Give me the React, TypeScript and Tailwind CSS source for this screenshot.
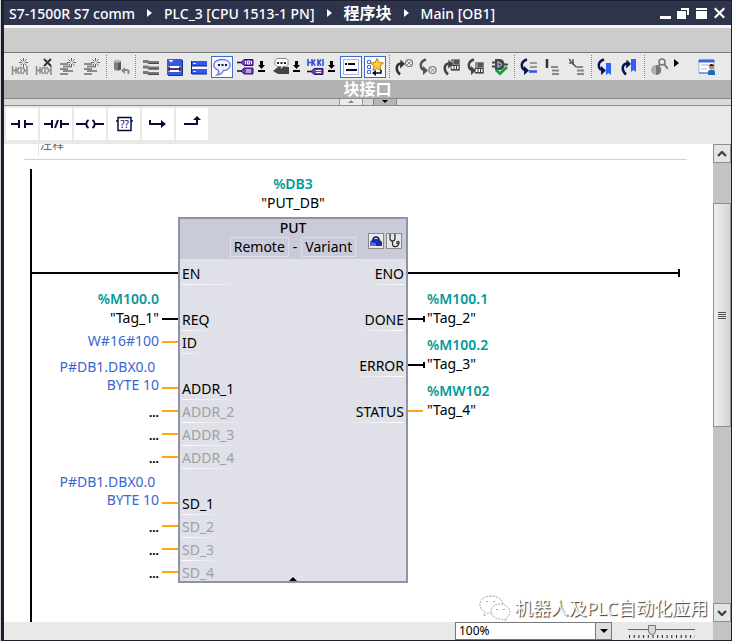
import React, { useState } from "react";

const CRUMBS = ["S7-1500R S7 comm", "PLC_3 [CPU 1513-1 PN]", "程序块", "Main [OB1]"];

type Kind = "bool" | "data";

interface Pin {
  name: string;
  kind: Kind;
  lines: string[];
  spaced?: boolean; // free row above the pin
  tag?: boolean; // first line is an absolute address
  optional?: boolean;
}

const INPUTS: Pin[] = [
  { name: "REQ", kind: "bool", lines: ["%M100.0", '"Tag_1"'], spaced: true, tag: true },
  { name: "ID", kind: "data", lines: ["W#16#100"] },
  { name: "ADDR_1", kind: "data", lines: ["P#DB1.DBX0.0 ", "BYTE 10"], spaced: true },
  { name: "ADDR_2", kind: "data", lines: [], optional: true },
  { name: "ADDR_3", kind: "data", lines: [], optional: true },
  { name: "ADDR_4", kind: "data", lines: [], optional: true },
  { name: "SD_1", kind: "data", lines: ["P#DB1.DBX0.0 ", "BYTE 10"], spaced: true },
  { name: "SD_2", kind: "data", lines: [], optional: true },
  { name: "SD_3", kind: "data", lines: [], optional: true },
  { name: "SD_4", kind: "data", lines: [], optional: true },
];

const OUTPUTS: Pin[] = [
  { name: "DONE", kind: "bool", lines: ["%M100.1", '"Tag_2"'] },
  { name: "ERROR", kind: "bool", lines: ["%M100.2", '"Tag_3"'] },
  { name: "STATUS", kind: "data", lines: ["%MW102", '"Tag_4"'] },
];

function Svg({ children }: { children: React.ReactNode }) {
  return (
    <svg viewBox="0 0 18 18" className="h-[18px] w-[18px] shrink-0" fill="none" aria-hidden="true">
      {children}
    </svg>
  );
}

function Spark() {
  return (
    <g stroke="#666">
      <path d="M12.5 0v3M12.5 6v3M8 4.5h3M14 4.5h3M9.5 1.5l2 2M15.5 1.5l-2 2M9.5 7.5l2-2M15.5 7.5l-2-2" />
    </g>
  );
}

function Contacts() {
  return (
    <g stroke="#8c8c8c" strokeWidth="1.5">
      <path d="M1.500 8v9M1.500 12.500h3M5 9v7" />
      <path d="M8.500 9L6 12.500 8.500 16M10 9v7" />
      <path d="M11.500 9l2.500 3.500-2.500 3.500M16 8v9M13.500 12.500H16" />
    </g>
  );
}

function Rows() {
  return <path d="M1 6h8M4 8.5h9M1 11h8M4 13h10M1 16h8" stroke="#8c8c8c" strokeWidth="2" />;
}

function PurpleTag({ y, mark }: { y: number; mark: string }) {
  return (
    <g>
      <path d={`M0 ${y + 3.5}h5`} stroke="#111" strokeWidth="1.5" />
      <path d={`M4 ${y + 3.5}l3-3h9v6H7z`} fill="#6f3fc0" stroke="#2c1264" />
      <path d={mark} stroke="#fff" />
    </g>
  );
}

// Curved arrow, going up into or down out of a call
function Arc({ up, color }: { up?: boolean; color: string }) {
  return up ? (
    <>
      <path d="M5 16.5C0 12 1 6 6 5.500" stroke={color} strokeWidth="2.5" />
      <path d="M5.500 1.500l4.500 4.500-5 4.500z" fill={color} />
    </>
  ) : (
    <>
      <path d="M7 1.500C0 4 1 9 4 12" stroke={color} strokeWidth="2.5" />
      <path d="M4 8l5 4.500L4 17z" fill={color} />
    </>
  );
}

function Wheel({ cx, cy }: { cx: number; cy: number }) {
  return (
    <g>
      <circle cx={cx} cy={cy} r="3.5" fill="#eee" stroke="#777" strokeWidth="1.2" />
      <path d={`M${cx - 2} ${cy - 2}l4 4M${cx + 2} ${cy - 2}l-4 4`} stroke="#888" />
    </g>
  );
}

function CallBox({ y }: { y: number }) {
  return (
    <g>
      <path d={`M8 ${y}h9v12H8z`} fill="#888" />
      <path d={`M11 ${y + 1}h5v4h-5z`} fill="#555" />
      <path d={`M8 ${y + 6.5}h8v4H8z`} fill="#fff" stroke="#444" />
      <path d={`M11 ${y + 7}v3M13.5 ${y + 7}v3`} stroke="#333" />
    </g>
  );
}

const ICONS: Record<string, React.ReactNode> = {
  insertNet: <><Contacts /><Spark /></>,
  deleteNet: <><Contacts /><path d="M9 1l7 7M16 1L9 8" stroke="#333" strokeWidth="2" /></>,
  insertRow: <><Rows /><Spark /></>,
  addRow: <><Rows /><Spark /></>,
  reset: (
    <>
      <path d="M2 3v8c0 2 7 2 7 0V3z" fill="#7d7d7d" />
      <path d="M6 3v9c2 0 3-.5 3-1V3z" fill="#555" />
      <ellipse cx="5.5" cy="3" rx="3.5" ry="1.6" fill="#bbb" />
      <path d="M12 12h3c2 0 2 2 1 4" stroke="#888" strokeWidth="2" />
      <path d="M9 12.500l4-3.500v7z" fill="#888" />
    </>
  ),
  networks: (
    <g>
      <path d="M2 2h5l1 1h10v3H7L6 5H2zM2 7.500h5l1 1h10v3H7l-1-1H2zM2 13h5l1 1h10v3H7l-1-1H2z" fill="#777" />
      <path d="M8 5.500h10M8 11h10M8 16.500h10" stroke="#444" />
    </g>
  ),
  openNet: (
    <>
      <path d="M2 1h15v16H2z" fill="#3358e8" />
      <path d="M3 8h13v6H3z" fill="#fff" />
      <path d="M3.500 2h5L6 4.500z" fill="#fff" />
      <path d="M4 8.500v5M15 8.500v5M4 11h11" stroke="#060633" strokeWidth="1.400" />
      <path d="M17.500 2v15.500H3" stroke="#1a2f8f" />
    </>
  ),
  closeNet: (
    <>
      <path d="M3 3h15v5H3zM3 11h15v5H3z" fill="#3457ec" />
      <path d="M3 8h15M3 16h15" stroke="#14247c" />
      <path d="M2.500 3v13" stroke="#14247c" />
      <path d="M4 5.500h3M4 13.500h3" stroke="#dfe6ff" />
      <path d="M3 9h15v1.500H3z" fill="#fff" />
    </>
  ),
  comment: (
    <>
      <path d="M9.500 1.500c10 0 10 11 1 11-1.500 3-4 4.500-6.500 4.500 2-1.500 2-3.500 1-5C-2 9 0 1.500 9.500 1.500z" fill="#eef1ff" stroke="#6d7fd8" strokeWidth="1.4" />
      <path d="M5 6h2v2H5zM8.500 6h2v2h-2zM12 6h2v2h-2z" fill="#111144" />
    </>
  ),
  operands: <><PurpleTag y={1} mark="M8.500 3v3M10.500 3v3h2V3h-2M14.500 3v3" /><PurpleTag y={9.5} mark="M9 12h5M9 14h5" /></>,
  tagInfo: (
    <>
      <path d="M1 13l5-4h11v7H6z" fill="#444" />
      <path d="M5 .500h9l2 2v4l-2 2h-3l-2 2.500V8.500H5l-2-2v-4z" fill="#fff" stroke="#888" />
      <path d="M5 4h2v2H5zM8.500 4h2v2h-2zM12 4h2v2h-2z" fill="#222" />
    </>
  ),
  contactTags: (
    <>
      <path d="M1 1v7M1 4.500h3M5 1v7M8 1.500L6 4.500l2 3M11 1v7M14 1.500l-2 3 2 3M16 1v7" stroke="#2f52e6" strokeWidth="1.6" />
      <PurpleTag y={10} mark="M9 12.500h5M9 14.500h5" />
    </>
  ),
  favList: (
    <>
      <path d="M1.500 1.500h15v15h-15z" fill="#fff" stroke="#a9b3e0" />
      <path d="M3 5h2v2H3zM6 11h1v2H6z" fill="#060633" />
      <path d="M6 6h7M4 12h11" stroke="#060633" strokeWidth="1.800" />
    </>
  ),
  favorites: (
    <>
      <path d="M1.500 2.500h3v3h-3zM1.500 7.500h3v3h-3zM1.500 12.500h3v3h-3z" stroke="#4a6be0" />
      <path d="M11 .500l2 4 4.500.500-3.500 3 1 4.500-4-2-4 2 1-4.500-3.500-3L9 4.500z" fill="#f9cf3c" stroke="#b98508" />
      <path d="M15 12v3H9" stroke="#060633" strokeWidth="1.500" />
      <path d="M6 15l4-3v6z" fill="#060633" />
    </>
  ),
  nextErr: <><Arc up color="#333" /><Wheel cx={14} cy={5} /></>,
  prevErr: <><Arc color="#555" /><Wheel cx={13.5} cy={12} /></>,
  toCaller: <><CallBox y={1} /><Arc up color="#444" /></>,
  toCalled: <><CallBox y={4} /><Arc color="#444" /></>,
  compile: (
    <>
      <path d="M1 4.500h4M1 8.500h4M12 6.500h5" stroke="#3b4a52" strokeWidth="2" />
      <path d="M4 1h5c6 0 6 11 0 11H4z" fill="#3b4a52" />
      <path d="M7 3.500l4 3-4 3z" stroke="#cfd8dc" />
      <path d="M5 12l4 3.500 7-6.500" stroke="#17a035" strokeWidth="2.800" />
    </>
  ),
  stepIn: (
    <>
      <path d="M10 5h7M10 9h7" stroke="#999" strokeWidth="2" />
      <path d="M9 13.500h8" stroke="#2f52e6" strokeWidth="2.500" />
      <Arc color="#0c1152" />
    </>
  ),
  expand: <><path d="M3 1v9" stroke="#333" strokeWidth="2.500" /><path d="M7 9h7M8 12.500h7M8 16h7" stroke="#888" strokeWidth="2" /></>,
  collapse: <><path d="M1 1l7 8M5 1v6M1 5h5" stroke="#555" strokeWidth="1.400" /><path d="M8 9h7M9 12.500h7M9 16h7" stroke="#888" strokeWidth="2" /></>,
  nextMark: <><path d="M9 5h5v12l-2.500-2L9 17z" fill="#2f62ee" /><Arc color="#0c1152" /></>,
  prevMark: <><path d="M10 1h5v13l-2.500-2-2.500 2z" fill="#2f62ee" /><Arc up color="#0c1152" /></>,
  monitor: (
    <>
      <circle cx="12" cy="4" r="3" stroke="#777" strokeWidth="1.500" />
      <path d="M14 6l4 5M10 6l-3 4" stroke="#777" strokeWidth="2" />
      <circle cx="6" cy="12" r="5" fill="#b0b0b0" />
      <path d="M6 7v10c7 0 7-10 0-10z" fill="#777" />
    </>
  ),
  layout: (
    <>
      <path d="M1 2h15v13H1z" fill="#fff" stroke="#9fb0e8" />
      <path d="M1 2h15v2H1zM1 15h15" fill="#3f68e2" stroke="#3f68e2" />
      <path d="M3 7h8M3 11h6" stroke="#aab4d8" />
      <circle cx="13.500" cy="9" r="2.500" fill="#c28a52" />
      <path d="M10 17v-3c0-3 7-3 7 0v3z" fill="#176fb8" />
      <path d="M11 8c1-3 5-2 5 0z" fill="#222" />
    </>
  ),
};

// "|" is a separator, "v" a drop-down mark, "*" marks a pressed button
const TOOLS = [
  "insertNet", "deleteNet", "insertRow", "addRow", "|", "reset", "|",
  "networks", "openNet", "closeNet", "*comment", "operands", "v", "tagInfo", "v", "contactTags", "v",
  "*favList", "*favorites", "|", "nextErr", "prevErr", "toCaller", "toCalled", "compile", "|",
  "stepIn", "expand", "collapse", "|", "nextMark", "prevMark", "|", "monitor",
];

function ToolButton({ id }: { id: string }) {
  const pressed = id.startsWith("*");
  const name = pressed ? id.slice(1) : id;
  return (
    <button
      aria-label={name}
      className={
        pressed
          ? "mx-px flex h-[22px] w-[22px] shrink-0 items-center justify-center border border-[#3a6fc9] bg-[#fbfcff]"
          : "flex h-[22px] w-6 shrink-0 items-center justify-center"
      }
    >
      <Svg>{ICONS[name]}</Svg>
    </button>
  );
}

function Toolbar() {
  return (
    <div className="flex h-[27px] shrink-0 items-center bg-[#e9e9e9] pl-1 pr-3">
      {TOOLS.map((t, i) => {
        if (t === "|") return <span key={i} className="flex h-[23px] w-[5px] shrink-0 justify-center"><span className="border-l border-dotted border-[#888]" /></span>;
        if (t === "v")
          return (
            <button key={i} aria-label="More" className="w-[11px] shrink-0">
              <svg viewBox="0 0 11 11" className="h-[11px] w-[11px]"><path d="M2 0h3v4h2L3.500 8 0 4h2zM0 9h7v2H0z" fill="#000" /></svg>
            </button>
          );
        return <ToolButton key={i} id={t} />;
      })}
      <button aria-label="More tools" className="-mt-2 ml-[3px]">
        <svg viewBox="0 0 5 8" className="h-2 w-[5px]"><path d="M0 0l5 4-5 4z" /></svg>
      </button>
      <span className="ml-auto flex"><ToolButton id="layout" /></span>
    </div>
  );
}

const FAVORITES: [string, React.ReactNode][] = [
  ["Normally open contact", <path key="a" d="M1 12h8M9 8v8M15 8v8M15 12h8" stroke="#0b0b3b" strokeWidth="2" />],
  ["Normally closed contact", <path key="b" d="M0 12h8M8 8v8M17 8v8M17 12h8M14 8l-3 8" stroke="#0b0b3b" strokeWidth="2" />],
  [
    "Coil",
    <g key="c">
      <path d="M-2 12h10M17 12h9" stroke="#0b0b3b" strokeWidth="2" />
      <path d="M10.500 8c-3 2-3 6 0 8M14.500 8c3 2 3 6 0 8" stroke="#0b0b3b" strokeWidth="2" />
    </g>,
  ],
  [
    "Empty box",
    <g key="d">
      <path d="M6 5.500h13v13H6zM4 9h2M19 9h2" stroke="#0b0b3b" strokeWidth="1.500" />
      <text x="12.500" y="15.500" textAnchor="middle" fontSize="10" fill="#0b0b3b">??</text>
    </g>,
  ],
  ["Open branch", <g key="e"><path d="M4 8v4h12" stroke="#0b0b3b" strokeWidth="2" /><path d="M15 8l5 4-5 4z" fill="#0b0b3b" /></g>],
  ["Close branch", <g key="f"><path d="M4 12h13V6" stroke="#0b0b3b" strokeWidth="2" /><path d="M13 8l4-4 4 4z" fill="#0b0b3b" /></g>],
];

function Operand({ pin }: { pin: Pin }) {
  if (pin.optional) return <span className="block text-[12px] font-bold leading-[17px]">...</span>;
  return (
    <span className="block shrink-0 whitespace-pre text-right">
      {pin.lines.map((l, i) => (
        <span
          key={i}
          className={
            pin.tag
              ? i === 0 ? "block font-semibold leading-[19px] text-[#009999]" : "block leading-[19px]"
              : "block leading-[18px] text-[#3a66d0]"
          }
        >
          {l}
        </span>
      ))}
    </span>
  );
}

function PinName({ name, optional, right }: { name: string; optional?: boolean; right?: boolean }) {
  return (
    <span className={right ? "flex flex-col items-end" : "flex flex-col items-start"}>
      <span className={optional ? "pt-[2px] leading-[20px] text-[#a0a0a4]" : "pt-[2px] leading-[20px]"}>{name}</span>
      <span className={right ? "h-px w-[130%] bg-linear-to-l from-white to-transparent" : "h-px w-[120%] bg-linear-to-r from-white to-transparent"} />
    </span>
  );
}

function Inputs() {
  return (
    <div className="flex w-[146px] shrink-0 flex-col pt-[93px]">
      <div className="flex h-[23px] pt-[10px]"><span className="h-[2px] flex-1 bg-black" /></div>
      {INPUTS.map((p, i) => (
        <div key={i} className={p.spaced ? "flex h-[46px] items-end justify-end gap-[3px]" : "flex h-[23px] items-end justify-end gap-[3px]"}>
          <div className={p.optional ? "pb-[2px]" : p.lines[0].startsWith("P#") ? "pb-[6px]" : "pb-1"}><Operand pin={p} /></div>
          <span className={p.kind === "bool" ? "mb-[11px] h-[2px] w-4 bg-black" : "mb-[11px] h-[2px] w-4 bg-[#ffa50a]"} />
        </div>
      ))}
    </div>
  );
}

function Outputs() {
  return (
    <div className="flex flex-1 flex-col pr-[33px] pt-[93px]">
      <div className="flex h-[23px] pt-[7px]">
        <span className="mt-[3px] h-[2px] flex-1 bg-black" />
        <span className="h-2 w-[2px] bg-black" />
      </div>
      {OUTPUTS.map((p, i) => (
        <div key={i} className="flex h-[46px] items-end">
          <span className={p.kind === "bool" ? "mb-[11px] h-[2px] w-[15px] bg-black" : "mb-[11px] h-[2px] w-[15px] bg-[#ffa50a]"} />
          <span className={p.kind === "bool" ? "mb-[9px] h-[6px] w-[2px] bg-black" : "w-[2px]"} />
          <span className="pb-1 pl-[2px]">
            <span className="block font-semibold leading-[19px] text-[#009999]">{p.lines[0]}</span>
            <span className="block leading-[19px]">{p.lines[1]}</span>
          </span>
        </div>
      ))}
    </div>
  );
}

function PutBlock() {
  return (
    <div className="flex w-[230px] shrink-0 flex-col pt-[5px] text-center">
      <span className="font-semibold leading-[19px] text-[#009999]">%DB3</span>
      <span className="leading-[19px]">"PUT_DB"</span>
      <div className="mt-[5px] border-2 border-[#8d94a5] bg-[#dfe0e8] text-left">
        <div className="relative h-10 bg-[#cacbd9] text-center">
          <div className="font-medium leading-[18px]">PUT</div>
          <div className="flex items-center justify-center gap-1 leading-[18px]">
            <span className="border border-[#dddee8] px-[3px]">Remote</span>
            <span>-</span>
            <span className="border border-[#dddee8] px-[3px]">Variant</span>
          </div>
          <div className="absolute right-1 top-[14px] flex gap-[2px]">
            <button aria-label="Configuration" className="h-4 w-4 border border-[#888] bg-[#e9e9ec]">
              <svg viewBox="0 0 14 14" className="h-[14px] w-[14px]" fill="none">
                <path d="M4 6c0-4 6-4 6 0" stroke="#111a70" strokeWidth="1.500" />
                <path d="M1 12V8l3-3h6l3 3v4z" fill="#1c2ca0" />
                <path d="M1 8l6 1v3H1z" fill="#4d6bf0" />
              </svg>
            </button>
            <button aria-label="Diagnostics" className="h-4 w-4 border border-[#888] bg-[#e9e9ec]">
              <svg viewBox="0 0 14 14" className="h-[14px] w-[14px]" fill="none" stroke="#333" strokeWidth="1.300">
                <path d="M4 1H3v3c0 4 5 4 5 0V1H7M5.500 7v3c0 4 6 3 6 0" /><circle cx="11" cy="8.500" r="1.200" />
              </svg>
            </button>
          </div>
        </div>
        <div className="flex justify-between px-[2px] pt-[3px]">
          <div className="flex flex-col">
            <PinName name="EN" />
            {INPUTS.map((p, i) => (
              <div key={i} className={p.spaced ? "h-[46px] pt-[23px]" : i === INPUTS.length - 1 ? "h-5" : "h-[23px]"}>
                <div className="flex"><PinName name={p.name} optional={p.optional} /></div>
              </div>
            ))}
          </div>
          <div className="flex flex-col items-end">
            <PinName name="ENO" right />
            {OUTPUTS.map((p) => (
              <div key={p.name} className="h-[46px] pt-[23px]"><PinName name={p.name} right /></div>
            ))}
          </div>
        </div>
        <div className="-mt-[5px] flex h-[5px] justify-center">
          <button aria-label="Collapse pins">
            <svg viewBox="0 0 8 4" className="h-1 w-2"><path d="M4 0l4 4H0z" /></svg>
          </button>
        </div>
      </div>
    </div>
  );
}

function ScrollButton({ label, d }: { label: string; d: string }) {
  return (
    <button aria-label={label} className="flex h-[19px] w-full shrink-0 items-center justify-center border border-[#8f8f8f] bg-[#e4e4e4]">
      <svg viewBox="0 0 10 6" className="h-[6px] w-[10px]" fill="none"><path d={d} stroke="#444" strokeWidth="2.400" /></svg>
    </button>
  );
}

function Scrollbar() {
  return (
    <div className="flex w-[18px] shrink-0 flex-col bg-[#c3c3c3]">
      <ScrollButton label="Scroll up" d="M1 5l4-4 4 4" />
      <div className="flex flex-1 flex-col">
        <div className="basis-10" />
        <div className="flex basis-[224px] flex-col items-center justify-center gap-px border border-[#8f8f8f] bg-linear-to-r from-[#efefef] to-[#d4d4d4]">
          {[0, 1, 2, 3].map((n) => <span key={n} className="h-px w-2 bg-[#555]" />)}
        </div>
      </div>
      <ScrollButton label="Scroll down" d="M1 1l4 4 4-4" />
    </div>
  );
}

function StatusBar() {
  const [zoom, setZoom] = useState("100%");
  const [level, setLevel] = useState(34);
  return (
    <div className="flex h-[18px] shrink-0 items-stretch justify-end bg-[#e9e9e9]">
      <div className="relative flex w-[157px]">
        <select
          aria-label="Zoom"
          value={zoom}
          onChange={(e) => setZoom(e.target.value)}
          className="w-full appearance-none border border-[#777] bg-white pl-[3px] text-[12px] leading-[16px]"
        >
          <option>50%</option>
          <option>100%</option>
          <option>200%</option>
        </select>
        <span className="pointer-events-none absolute inset-y-0 right-0 flex w-[17px] items-center justify-center border border-[#777] bg-[#dedede]">
          <svg viewBox="0 0 8 4" className="h-1 w-2"><path d="M0 0h8L4 4z" /></svg>
        </span>
      </div>
      <div className="ml-4 mr-[18px] flex w-[67px] flex-col pt-[3px]">
        <input
          type="range"
          aria-label="Zoom level"
          value={level}
          onChange={(e) => setLevel(Number(e.target.value))}
          className="h-[10px] w-full appearance-none bg-linear-to-b from-transparent from-45% via-[#666] via-45% to-transparent to-55% [&::-webkit-slider-thumb]:h-[10px] [&::-webkit-slider-thumb]:w-2 [&::-webkit-slider-thumb]:appearance-none [&::-webkit-slider-thumb]:rounded-b-sm [&::-webkit-slider-thumb]:border [&::-webkit-slider-thumb]:border-[#777] [&::-webkit-slider-thumb]:bg-[#d8d8d8]"
        />
        <svg viewBox="0 0 67 3" className="h-[3px] w-full"><path d="M1 1.500h66" stroke="#222" strokeWidth="3" strokeDasharray="1 3.700" /></svg>
      </div>
      <div className="w-[18px] bg-[#c3c3c3]" />
    </div>
  );
}

function Watermark() {
  return (
    <div className="pointer-events-none absolute bottom-0 right-[5px] flex items-center gap-1 text-[18px] leading-[28px] text-white [text-shadow:1px_1px_1px_#333]">
      <svg viewBox="0 0 32 26" className="h-[26px] w-8" fill="#fff" stroke="#aaa" strokeWidth="1" strokeDasharray="2 1">
        <path d="M12 1C-1 1-2 14 6 17l-1 4 4-3h5c9 0 12-8 9-12-2-3-6-5-11-5z" />
        <path d="M21 9c-12 0-12 15 1 15l4 1 1 1v-3c8-5 3-14-6-14z" />
        <path d="M8 6v1M15 6v1M18 14v1M25 14v1" strokeWidth="2" />
      </svg>
      <span>机器人及PLC自动化应用</span>
    </div>
  );
}

export default function App() {
  return (
    <div className="h-screen bg-[#d0d0d0] pl-px font-['Noto_Sans','Noto_Sans_CJK_SC',sans-serif] text-[14px] text-black">
      <div className="flex h-full flex-col overflow-hidden border-b border-l-[3px] border-r border-t border-[#1b2030] bg-[#e9e9e9]">
        <header className="flex h-6 shrink-0 items-center bg-[#2d344c] pl-[5px] pr-[6px] font-medium text-white">
          {CRUMBS.map((c, i) => (
            <React.Fragment key={c}>
              {i > 0 && <svg viewBox="0 0 5 8" className="mx-3 h-2 w-[5px]"><path d="M0 0l5 4-5 4z" fill="#fff" /></svg>}
              <span className={c === "程序块" ? "whitespace-nowrap text-[16px] font-bold" : "whitespace-nowrap"}>{c}</span>
            </React.Fragment>
          ))}
          <div className="ml-auto flex gap-[6px]">
            {["M1 9h11v3H1z", "M0 4h9v8H0zM4 1h8v7h-2V3H4z", "M1 1h11v2H1zM1 4h11v8H1z", "M1 2l1.500-1.500 4 4 4-4L12 2 8 6l4 4-1.500 1.500-4-4-4 4L1 10l4-4z"].map((d, i) => (
              <button key={i} aria-label={["Minimize", "Restore", "Maximize", "Close"][i]}>
                <svg viewBox="0 0 12 12" className="h-3 w-3"><path d={d} fill="#fff" /></svg>
              </button>
            ))}
          </div>
        </header>
        <div className="h-[27px] shrink-0 border-t-[3px] border-[#f5f5f5] bg-[#ccc]" />
        <div className="h-px shrink-0 bg-[#777]" />
        <Toolbar />
        <div className="h-[18px] shrink-0 bg-[#b1b1b1] text-center text-[16px] font-bold leading-[18px] text-white">块接口</div>
        <div className="flex h-2 shrink-0 justify-center border-b border-t border-[#8a8a8a] bg-[#dadada]">
          <button aria-label="Collapse interface" className="flex w-6 justify-center border-x border-[#999] bg-[#ececec] pt-px">
            <svg viewBox="0 0 6 3" className="h-[3px] w-[6px]"><path d="M3 0l3 3H0z" fill="#888" /></svg>
          </button>
          <button aria-label="Expand interface" className="ml-[10px] flex w-6 justify-center border-x border-[#888] bg-[#b5b5b5] pt-px">
            <svg viewBox="0 0 6 3" className="h-[3px] w-[6px]"><path d="M0 0h6L3 3z" /></svg>
          </button>
        </div>
        <div className="flex h-[38px] shrink-0 gap-[2px] pl-[2px] pt-[2px]">
          {FAVORITES.map(([label, art]) => (
            <button key={label} aria-label={label} className="flex h-8 w-8 items-center justify-center bg-white">
              <svg viewBox="0 0 24 24" className="h-6 w-6 overflow-visible" fill="none">{art}</svg>
            </button>
          ))}
        </div>

        <div className="flex min-h-0 flex-1">
          <main className="relative flex min-w-0 flex-1 flex-col overflow-hidden bg-white">
            <div className="ml-5 mr-[26px] h-4 shrink-0 border-b border-[#cfcfdc] pl-[14px]">
              <div className="flex h-3 items-start border-l border-[#e2e2e2] pl-[1px]">
                <div className="flex h-[9px] items-end overflow-hidden text-[12px] leading-[16px] text-[#666]"><span>注释</span></div>
              </div>
            </div>
            <div className="ml-[26px] mt-[9px] flex min-h-0 flex-1 items-start">
              <div className="h-full w-[2px] shrink-0 bg-black" />
              <Inputs />
              <PutBlock />
              <Outputs />
            </div>
            <Watermark />
          </main>
          <Scrollbar />
        </div>
        <StatusBar />
      </div>
    </div>
  );
}
